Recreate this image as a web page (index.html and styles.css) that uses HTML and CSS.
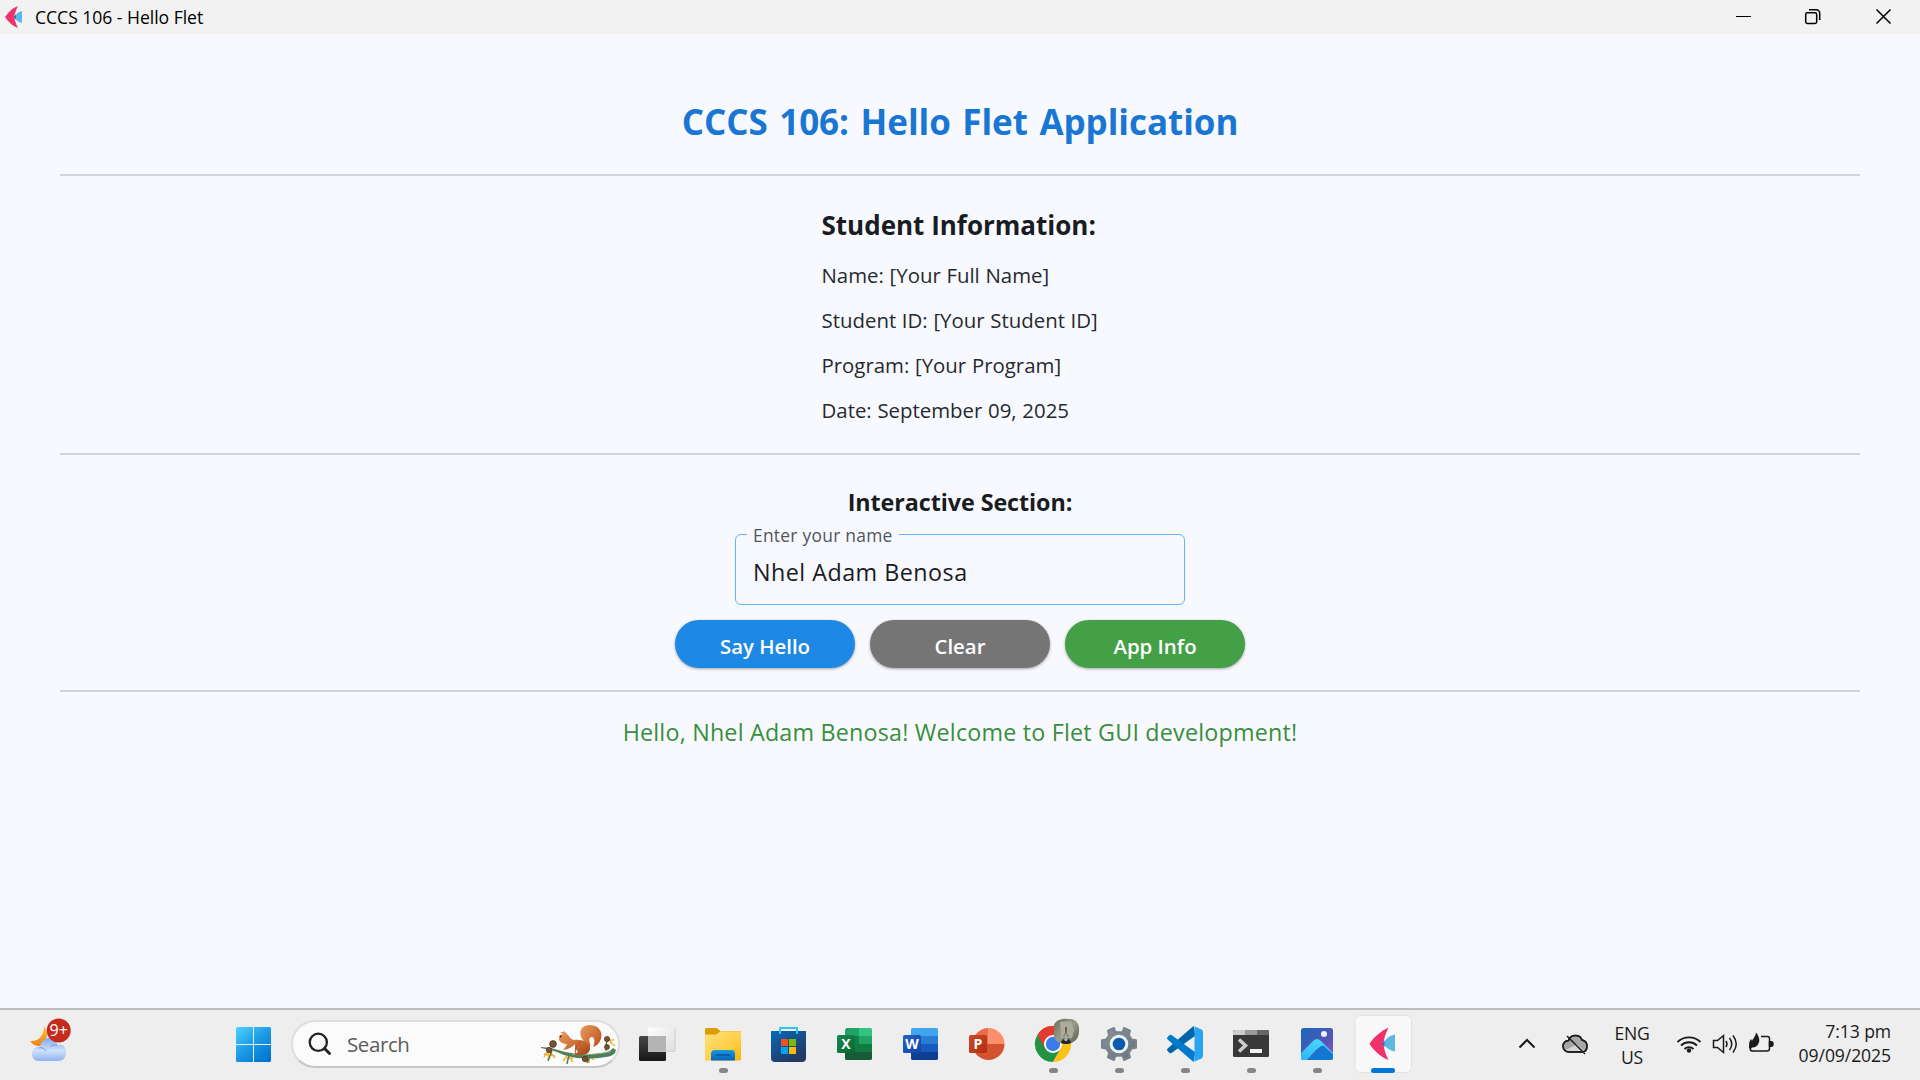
FILE: index.html
```
<!DOCTYPE html>
<html lang="en">
<head>
<meta charset="utf-8">
<title>CCCS 106 - Hello Flet</title>
<link rel="stylesheet" href="styles.css">
</head>
<body>
<header class="titlebar">
  <svg class="app-icon" width="17" height="22" viewBox="0 0 17 22"><path d="M13 0C7 2 3 7 0 11c3 4 7 9 13 11-2-4-3-7-4-11 1-4 2-7 4-11z" fill="#f0316c"/><path d="M8.500 11l4.500-4.500 4-1.500v12l-4-1.500z" fill="#5bb8e8"/><path d="M8.500 11l2.500-2.500v5z" fill="#3d62a8"/></svg>
  <span class="app-title">CCCS 106 - Hello Flet</span>
  <div class="window-controls">
    <svg width="70" height="34" viewBox="0 0 70 34"><path d="M27 16.500h15" stroke="#000"/></svg>
    <svg width="70" height="34" viewBox="0 0 70 34" fill="none" stroke="#000" stroke-width="1.500"><rect x="26.700" y="12.700" width="11" height="10.800" rx="1.700"/><path d="M30 9.700h7.300a3.400 3.400 0 0 1 3.400 3.400v7"/></svg>
    <svg width="70" height="34" viewBox="0 0 70 34"><path d="M27.500 9.500l14 14M41.500 9.500l-14 14" stroke="#000" stroke-width="1.500"/></svg>
  </div>
</header>

<main class="page">
  <h1 class="heading">CCCS 106: Hello Flet Application</h1>
  <hr class="divider">
  <section class="student">
    <h2 class="student-heading">Student Information:</h2>
    <p class="student-line">Name: [Your Full Name]</p>
    <p class="student-line">Student ID: [Your Student ID]</p>
    <p class="student-line">Program: [Your Program]</p>
    <p class="student-line">Date: September 09, 2025</p>
  </section>
  <hr class="divider">
  <section class="interactive">
    <h2 class="interactive-heading">Interactive Section:</h2>
    <div class="field"><span class="field-label">Enter your name</span><span class="field-value">Nhel Adam Benosa</span></div>
    <div class="actions">
      <button class="btn btn-blue">Say Hello</button>
      <button class="btn btn-grey">Clear</button>
      <button class="btn btn-green">App Info</button>
    </div>
  </section>
  <hr class="divider">
  <p class="greeting">Hello, Nhel Adam Benosa! Welcome to Flet GUI development!</p>
</main>

<footer class="taskbar">
  <svg class="weather" width="50" height="70" viewBox="0 0 50 70">
    <defs>
      <linearGradient id="cloud" x1="0" y1="0" x2="0" y2="1"><stop offset="0" stop-color="#7fa8ec"/><stop offset=".55" stop-color="#cfe0fa"/><stop offset="1" stop-color="#8fb2f0"/></linearGradient>
      <linearGradient id="moon" x1="0" y1="0" x2="0" y2="1"><stop offset="0" stop-color="#fbc630"/><stop offset="1" stop-color="#f08021"/></linearGradient>
    </defs>
    <path d="M14 16c4 5 5 16-4 20-5 0-8-2-10-5 8 1 14-5 14-15z" fill="url(#moon)"/>
    <path d="M7.500 51a7.300 7.300 0 0 1-.5-14c2-1 3-.5 3 0 1-5 4-8.500 8.500-9 5 0 8 3 9 7 5-2 9 2 8.500 8-.5 5-3 8-8 8z" fill="url(#cloud)"/>
    <path d="M9 38c3-1 6 1 7 3M20 37c2-2 4-2 7-2" stroke="#7399e0" fill="none"/>
    <circle cx="28.700" cy="20.500" r="12" fill="#c42b1c"/>
    <text x="28.700" y="26" class="badge-text">9+</text>
  </svg>
  <svg class="start" width="35" height="35" viewBox="0 0 35 35"><defs><linearGradient id="win" gradientUnits="userSpaceOnUse" x1="0" y1="0" x2="28" y2="35"><stop offset="0" stop-color="#4fd3ff"/><stop offset=".5" stop-color="#1d9de6"/><stop offset="1" stop-color="#0075d3"/></linearGradient></defs><path fill="url(#win)" d="M1.500 0H17v17H0V1.500A1.500 1.500 0 0 1 1.500 0zM18 0h15.500A1.500 1.500 0 0 1 35 1.500V17H18zM0 18h17v17H1.500A1.500 1.500 0 0 1 0 33.500zM18 18h17v15.500a1.500 1.500 0 0 1-1.500 1.500H18z"/></svg>
  <div class="search">
    <svg width="24" height="24" viewBox="0 0 24 24" fill="none" stroke="#222" stroke-linecap="round"><circle cx="10.300" cy="10.300" r="8.600" stroke-width="2.300"/><path d="M16.500 16.500l5 5" stroke-width="3"/></svg>
    <span class="search-text">Search</span>
    <svg class="squirrel" width="77" height="42" viewBox="0 0 77 42">
      <defs><linearGradient id="fur" x1="0" y1="0" x2="1" y2="1"><stop offset="0" stop-color="#e99a5c"/><stop offset=".6" stop-color="#c96a33"/><stop offset="1" stop-color="#9b4218"/></linearGradient></defs>
      <path d="M8 27l-4 6M9 28l-1 8M10 28l5 6M9 31l6 1M8 31l-4-1M27 32l-4 5M28 33l-1 6M29 33l4 5M29 34l4 0M68 13l4 7M67 16l7 0M70 18l5 4M49 33l-3 5M49 33l0 6M50 33l4 3" stroke="#eeb43a" stroke-width="1.500"/>
      <path d="M1 23l10 1 14 4q22 4 36 1 8 0 12-5l3 2q-1 6-10 7-24 4-42-2Q14 26 1 24z" fill="#4f7f56"/>
      <path d="M12 27l-4 10M29 31l-2 9M66 27q-1-6 2-12M50 33l-3 6" stroke="#4f7f56" stroke-width="1.400" fill="none"/>
      <path d="M32 30.500q22 1 39-3" stroke="#8fb182" stroke-width="1" fill="none"/>
      <path d="M46 19C38 13 38 1 50 1c10 0 14 9 10 16-1 3-4 5-7 6 2-5 2-9-1-10-3 0-3 3-2 6 1 5-1 9-5 11z" fill="url(#fur)"/>
      <path d="M20 8l3 0 1-1 3 3c3 3 3 5 7 6 8-1 15 2 16 8 0 4-3 7-8 7h-8l4-3q-4-4-3-8-4 5-12 6 3-3 4-6c-4 0-7-2-8-4 0-3 1-6 4-6z" fill="url(#fur)"/>
      <circle cx="20.500" cy="12.500" r="1" fill="#2b1a12"/><path d="M41 18q-8 5-5 12" stroke="#a44d21" fill="none"/>
      <g fill="#7b5135" stroke="#4a2f1e" stroke-width=".7"><circle cx="13" cy="20" r="3.400"/><circle cx="9" cy="26" r="2.700"/><circle cx="67" cy="15" r="2.600"/><circle cx="67" cy="23" r="2.500"/><circle cx="45" cy="35" r="2.700"/></g>
    </svg>
  </div>
  <nav class="apps">
    <svg class="app" viewBox="0 0 66 70"><defs><linearGradient id="tv1" x1="0" y1="0" x2="0" y2="1"><stop offset="0" stop-color="#484848"/><stop offset="1" stop-color="#161616"/></linearGradient><linearGradient id="tv2" x1="0" y1="0" x2="1" y2="1"><stop offset="0" stop-color="#fdfdfd"/><stop offset="1" stop-color="#dedede"/></linearGradient></defs><rect x="15" y="26" width="27" height="25" rx="1.500" fill="url(#tv1)"/><rect x="24" y="17.500" width="27" height="24" rx="1" fill="url(#tv2)"/><path d="M24 26h18v15.500H24z" fill="#b4b4b4"/><path d="M24 41.300h27V18" fill="none" stroke="#c8c8c8" stroke-width=".8"/></svg>

    <svg class="app" viewBox="0 0 66 70"><defs><linearGradient id="fold" x1="0" y1="0" x2="1" y2="1"><stop offset="0" stop-color="#ffdf7a"/><stop offset=".6" stop-color="#ffcf45"/><stop offset="1" stop-color="#f8b500"/></linearGradient><linearGradient id="dock" x1="0" y1="0" x2="0" y2="1"><stop offset="0" stop-color="#159ae4"/><stop offset="1" stop-color="#0364b6"/></linearGradient></defs><path d="M15 19.500a1.500 1.500 0 0 1 1.500-1.500h10l4 3h19a1.500 1.500 0 0 1 1.500 1.500V26H15z" fill="#dc9c05"/><path d="M15 24.500h11l4.500-3.200H51v28.200a1 1 0 0 1-1 1H16a1 1 0 0 1-1-1z" fill="url(#fold)"/><path d="M21 50.500V44a4 4 0 0 1 4-4h16a4 4 0 0 1 4 4v6.500z" fill="url(#dock)"/><path d="M25.500 45h15" stroke="#06539b" stroke-width="1.500"/><rect class="running" x="29" y="58" width="9" height="5" rx="2.500"/></svg>

    <svg class="app" viewBox="0 0 66 70"><defs><linearGradient id="store" x1="0" y1="0" x2=".6" y2="1"><stop offset="0" stop-color="#0669b8"/><stop offset="1" stop-color="#233862"/></linearGradient></defs><path d="M15 21h35v27a4 4 0 0 1-4 4H19a4 4 0 0 1-4-4z" fill="url(#store)"/><path d="M24 24v-6h17v6" fill="none" stroke="#2cc6fa" stroke-width="1.900"/><path d="M25 29h7v7h-7z" fill="#f25022"/><path d="M33 29h7v7h-7z" fill="#7fba00"/><path d="M25 37h7v7h-7z" fill="#00a4ef"/><path d="M33 37h7v7h-7z" fill="#ffb900"/></svg>

    <svg class="app" viewBox="0 0 66 70"><defs><linearGradient id="xl" x1="0" y1="0" x2="1" y2="1"><stop offset="0" stop-color="#18884f"/><stop offset="1" stop-color="#0b6631"/></linearGradient></defs><path d="M24.500 18H37v8H23v-6.500z" fill="#21a366"/><path d="M37 18h11.500a1.500 1.500 0 0 1 1.500 1.500V26H37z" fill="#33c481"/><path d="M23 26h14v8H23z" fill="#157f48"/><path d="M37 26h13v8H37z" fill="#21a366"/><path d="M23 34h27v8H23z" fill="#107c41"/><path d="M23 42h27v6.500a1.500 1.500 0 0 1-1.500 1.500h-24a1.500 1.500 0 0 1-1.500-1.500z" fill="#185c37"/><rect x="15" y="25" width="18" height="18" rx="1.500" fill="url(#xl)"/><text x="24" y="39" class="office">X</text></svg>

    <svg class="app" viewBox="0 0 66 70"><defs><linearGradient id="wd" x1="0" y1="0" x2="1" y2="1"><stop offset="0" stop-color="#2563ca"/><stop offset="1" stop-color="#1443a6"/></linearGradient></defs><path d="M23 26v-6.500a1.500 1.500 0 0 1 1.500-1.500h24a1.500 1.500 0 0 1 1.500 1.500V26z" fill="#41a5ee"/><path d="M23 26h27v8H23z" fill="#2b7cd3"/><path d="M23 34h27v8H23z" fill="#185abd"/><path d="M23 42h27v6.500a1.500 1.500 0 0 1-1.500 1.500h-24a1.500 1.500 0 0 1-1.500-1.500z" fill="#103f91"/><rect x="15" y="25" width="18" height="18" rx="1.500" fill="url(#wd)"/><text x="24" y="39" class="office">W</text></svg>

    <svg class="app" viewBox="0 0 66 70"><defs><linearGradient id="pp" x1="0" y1="0" x2="1" y2="1"><stop offset="0" stop-color="#ca4c28"/><stop offset="1" stop-color="#b02d10"/></linearGradient></defs><path d="M34.500 18a16 16 0 0 0-16 16h16z" fill="#ed6c47"/><path d="M34.500 18a16 16 0 0 1 16 16h-16z" fill="#ff8f6b"/><path d="M18.500 34a16 16 0 0 0 32 0z" fill="#d35230"/><rect x="15" y="25" width="18" height="18" rx="1.500" fill="url(#pp)"/><text x="24" y="39" class="office">P</text></svg>

    <svg class="app" viewBox="0 0 66 70"><path d="M33 34L17.400 25A18 18 0 0 1 48.600 25z" fill="#e33b2e"/><path d="M17.400 25A18 18 0 0 0 33 52l7.800-13.500L33 34z" fill="#229342"/><path d="M48.600 25A18 18 0 0 1 33 52l7.800-13.500L33 25z" fill="#fbc116"/><path d="M17.400 25l7.800 13.500L33 25h15.600A18 18 0 0 0 17.400 25z" fill="#e33b2e"/><circle cx="33" cy="34" r="9" fill="#fff"/><circle cx="33" cy="34" r="7.200" fill="#3c7bec"/><defs><linearGradient id="av" x1="0" y1="0" x2="1" y2="1"><stop offset="0" stop-color="#6d6e5c"/><stop offset=".5" stop-color="#999c8a"/><stop offset="1" stop-color="#55564b"/></linearGradient></defs><path d="M34 15c2-5 8-7 14-6 8-1 12 5 11 12 0 7-4 12-12 13-9 0-14-4-13-11z" fill="url(#av)"/><path d="M40 12l11-1 3 9-2 8H41z" fill="#a9ac9b"/><path d="M46 17v7" stroke="#7b5a4b" stroke-width="2" fill="none"/><path d="M43.500 27l2.500-5 2.500 5" stroke="#8d7a6c" stroke-width="1.200" fill="none"/><path d="M41 33q1-4 5-5 4 1 5 5-5 2-10 0z" fill="#20252a"/><circle cx="46" cy="29.500" r="1.700" fill="#aeb5b8"/><rect class="running" x="29" y="58" width="9" height="5" rx="2.500"/></svg>

    <svg class="app" viewBox="0 0 66 70"><defs><linearGradient id="gear" x1="0" y1="0" x2="1" y2="1"><stop offset="0" stop-color="#8b949c"/><stop offset="1" stop-color="#68727b"/></linearGradient></defs><g fill="url(#gear)"><path stroke="#7a838b" stroke-width="2" stroke-linejoin="round" d="M28 18l1.300 4.200h7.400L38 18l6 2.700-1.200 4.600 3 4.200 4.200.7v7.600l-4.200.7-3 4.200L44 47.300 38 50l-1.300-4.200h-7.400L28 50l-6-2.700 1.200-4.600-3-4.200-4.200-.7v-7.600l4.200-.7 3-4.200L22 20.700z"/></g><circle cx="33" cy="34" r="9.300" fill="#f2f2f2"/><circle cx="33" cy="34" r="6.300" fill="#0b5cad"/><rect class="running" x="29" y="58" width="9" height="5" rx="2.500"/></svg>

    <svg class="app" viewBox="0 0 66 70"><path d="M15.600 38.500L41.500 16l2 9.500L19.500 43q-1.200.7-2.200-.2l-1.800-1.800q-1-1.300.1-2.500z" fill="#0065a9"/><path d="M15.600 29.500L41.500 52l2-9.500L19.500 25q-1.200-.7-2.200.2l-1.800 1.800q-1 1.300.1 2.500z" fill="#007acc"/><path d="M41.500 16l8 3.600q1.500.9 1.500 2.400v24q0 1.500-1.500 2.400l-8 3.600q1 0 1-2V18q0-2-1-2z" fill="#28a5f3"/><rect class="running" x="29" y="58" width="9" height="5" rx="2.500"/></svg>

    <svg class="app" viewBox="0 0 66 70"><rect x="15" y="20" width="36" height="27" rx="1.500" fill="#383838"/><path d="M16.500 20H27v5H15v-3.500A1.500 1.500 0 0 1 16.500 20z" fill="#ccc"/><path d="M27 20h12v5H27z" fill="#999"/><path d="M39 20h10.500a1.500 1.500 0 0 1 1.500 1.500V25H39z" fill="#666"/><path d="M21 29.500l6.500 6-6.500 6" fill="none" stroke="#ccc" stroke-width="3.500"/><path d="M32 39h12v4H32z" fill="#f2f2f2"/><rect class="running" x="29" y="58" width="9" height="5" rx="2.500"/></svg>

    <svg class="app" viewBox="0 0 66 70"><defs><linearGradient id="sky" x1="0" y1="0" x2="1" y2="1"><stop offset="0" stop-color="#1767bd"/><stop offset=".6" stop-color="#5556b5"/><stop offset="1" stop-color="#9a4fc0"/></linearGradient><linearGradient id="hill" x1="1" y1="0" x2="0" y2="1"><stop offset="0" stop-color="#54e2ff"/><stop offset="1" stop-color="#27b3f2"/></linearGradient><clipPath id="frame"><rect x="17" y="18" width="32" height="32" rx="2.500"/></clipPath></defs><g clip-path="url(#frame)"><path d="M17 18h32v32H17z" fill="url(#sky)"/><path d="M14 46l15-15q4-4 8 0l16 16-3 3-11-11q-3-3-6 0L21 52h-7z" fill="url(#hill)"/><path d="M36 37q2.500-2.500 5 0l10 9v6H21z" fill="#1278d2"/></g><circle cx="40" cy="24" r="3" fill="#eef3fb"/><rect class="running" x="29" y="58" width="9" height="5" rx="2.500"/></svg>

    <svg class="app" viewBox="0 0 66 70"><rect x="5" y="5.500" width="56.500" height="57" rx="5" fill="#f8f8f8" stroke="#e2e2e2"/><path d="M38.500 17.500C31 21 24 27 19.500 33.700 24 41 31 47 38.500 50c-2.500-5-4.500-10-5-16.300.5-6 2.500-11 5-16.200z" fill="#f0316c"/><path d="M31.500 33.700l7-6.700q3-2 6.500-2.500v17q-3.500-.5-6.500-2.500z" fill="#5bb8e0"/><path d="M31.500 33.700l3-3v6z" fill="#4a67a5"/><rect x="21" y="58" width="24" height="5" rx="2.500" fill="#0078d7"/></svg>
  </nav>
  <div class="tray">
    <svg width="100" height="70" viewBox="0 0 100 70" fill="none" stroke="#1b1b1b" stroke-width="1.500">
      <path d="M19.500 37.500l7.500-7.500 7.500 7.500" stroke-width="2"/>
      <path d="M69 42a5.500 5.500 0 0 1-.5-11.500q1.500-5 7-5 5 0 6.500 4.500 5 1 5 6 0 6-5 6z" fill="#a6a6a6"/><path d="M66 40l11-6 7 7H68z" fill="#d5d5d5" stroke="none"/><path d="M69 42a5.500 5.500 0 0 1-.5-11.500q1.500-5 7-5 5 0 6.500 4.500 5 1 5 6 0 6-5 6zM67 26l18 18"/>
    </svg>
    <div class="language"><span class="lang-main">ENG</span><span class="lang-region">US</span></div>
    <svg width="120" height="70" viewBox="164 0 120 70" fill="none" stroke="#1b1b1b" stroke-width="1.500">
      <path d="M177.500 32a16.500 16.500 0 0 1 23 0M181 35.500a11.500 11.500 0 0 1 16 0M184.500 39a6.500 6.500 0 0 1 9 0" stroke-width="1.800"/><circle cx="189" cy="40.500" r="2.200" fill="#1b1b1b" stroke="none"/>
      <path d="M213.500 30.500h4l6-5v17l-6-5h-4zM226 31q2 3 0 6M229.500 28q4.500 6 0 12M233 25.500q6.500 8.500 0 17"/>
      <path d="M261 26.500h6.500a2 2 0 0 1 2 2v10a2.500 2.500 0 0 1-2.500 2.500h-14q-2.500 0-3-2"/><path d="M269.500 32q3.500-1 3.500 2t-3.500 2z" fill="#1b1b1b"/><path d="M256 22.500c4 5 4 9 2 12-2 3-5 3-6 3l-1.500 2-1.500-1.500c0-4 0-7 2-9l1 2c1-3 3-3 4-8.500z" fill="#1b1b1b" stroke="none"/>
    </svg>
    <div class="clock"><span class="time">7:13 pm</span><span class="date">09/09/2025</span></div>
  </div>
</footer>
</body>
</html>
```
FILE: styles.css
```
* { box-sizing: border-box; margin: 0; padding: 0; }

body {
  width: 1920px;
  height: 1080px;
  overflow: hidden;
  display: flex;
  flex-direction: column;
  background: #f8f9ff;
  color: #191c20;
  font-family: "Open Sans", "Noto Sans", sans-serif;
}

svg { display: block; flex: none; }

.titlebar {
  display: flex;
  align-items: center;
  height: 34px;
  padding-left: 5px;
  background: #f2f2f2;
  color: #000;
}
.app-title { margin-left: 13px; font-size: 17.6px; line-height: 34px; letter-spacing: -0.04px; }
.window-controls { display: flex; margin-left: auto; padding-right: 1px; }

.page {
  flex: 1;
  display: flex;
  flex-direction: column;
  align-items: center;
  padding: 64px 60px 0;
}
.heading {
  font-size: 35px;
  line-height: 48px;
  letter-spacing: -0.05px;
  word-spacing: 2.5px;
  color: #1976d2;
}
.divider { width: 100%; height: 2px; border: 0; background: #d0d2dc; }
.heading + .divider { margin-top: 28px; }

.student {
  display: flex;
  flex-direction: column;
  gap: 15px;
  width: 277px;
  margin: 31px 0 28px;
  white-space: nowrap;
}
.student-heading { margin-bottom: 2px; font-size: 26px; line-height: 36px; letter-spacing: 0; }
.student-line { color: #26292d; font-size: 20.4px; line-height: 30px; letter-spacing: 0; word-spacing: 0.4px; }

.interactive {
  display: flex;
  flex-direction: column;
  align-items: center;
  gap: 15px;
  margin: 31px 0 22px;
}
.interactive-heading { margin-bottom: 0.5px; font-size: 23.3px; line-height: 32px; letter-spacing: -0.07px; }
.field {
  position: relative;
  width: 450px;
  height: 71.5px;
  padding: 21px 17px 0;
  border: 1.5px solid #64b5f6;
  border-radius: 6px;
}
.field-label {
  position: absolute;
  left: 11px;
  top: -13px;
  padding: 0 6px;
  background: #f8f9ff;
  color: #50555c;
  font-size: 17.4px;
  line-height: 26px;
  letter-spacing: 0.27px;
}
.field-value { display: block; font-size: 23.3px; line-height: 33px; letter-spacing: 0.48px; }

.actions { display: flex; gap: 15px; }
.btn {
  width: 180px;
  height: 48px;
  padding-top: 4px;
  border: 0;
  border-radius: 24px;
  color: #fff;
  font: 600 20.4px/30px "Open Sans", "Noto Sans", sans-serif;
  letter-spacing: 0;
  box-shadow: 0 1px 3px rgba(0, 0, 0, 0.35);
}
.btn-blue { background: #1e88e5; }
.btn-grey { background: #757575; }
.btn-green { background: #43a047; }

.greeting {
  margin-top: 24px;
  color: #388e3c;
  font-size: 23.3px;
  line-height: 33px;
  letter-spacing: 0.2px;
}

.taskbar {
  display: flex;
  height: 72px;
  border-top: 2px solid #bdbdbd;
  background: #eee;
}
.weather { margin-left: 30px; }
.badge-text { fill: #fff; font-size: 16px; text-anchor: middle; }
.start { margin: 17px 0 0 156px; }
.search {
  display: flex;
  align-items: center;
  width: 329px;
  height: 48px;
  margin: 10px 4px 0 20px;
  padding-left: 15px;
  border: 2px solid #dedede;
  border-bottom-color: #c6c6c6;
  border-radius: 24px;
  background: #fbfbfb;
}
.search-text { margin-left: 15px; color: #5c5c5c; font-size: 20.5px; line-height: 30px; letter-spacing: -0.4px; }
.squirrel { margin: 2px 1px 0 auto; }

.apps { display: flex; }
.app { width: 66px; height: 70px; }
.running { fill: #868686; }
.office { fill: #fff; font-size: 14px; font-weight: 700; text-anchor: middle; }

.tray {
  display: flex;
  flex: 1;
  padding: 0 29px 0 84px;
  color: #1b1b1b;
  font-size: 17.6px;
  line-height: 24px;
}
.language, .clock { display: flex; flex-direction: column; }
.language { align-items: center; width: 64px; padding-top: 11px; letter-spacing: -0.3px; }
.clock { align-items: flex-end; margin-left: auto; padding-top: 9px; letter-spacing: -0.1px; }
```
